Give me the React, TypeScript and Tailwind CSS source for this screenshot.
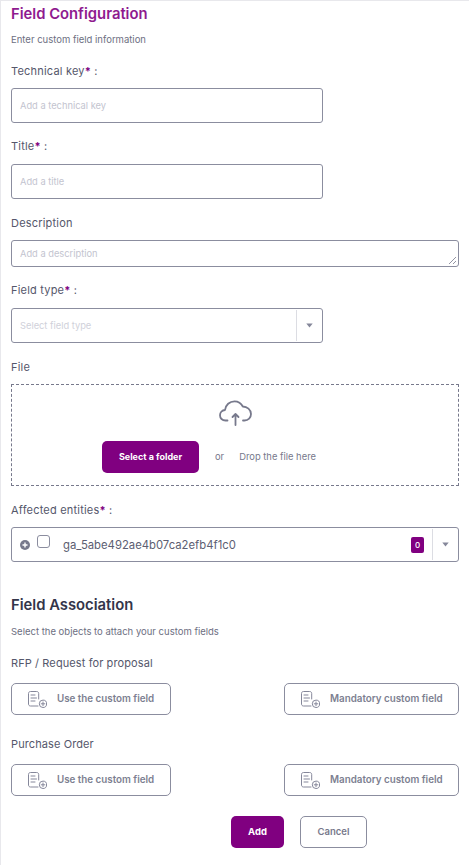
import React from "react";

const Label = ({ text, req, cls }: { text: string; req?: boolean; cls: string }) => (
  <div className={`text-[11px] leading-[16px] font-normal text-[#55576b] tracking-[0.2px] ${cls}`}>
    {text}
    {req && <span className="text-[#800080] font-bold">*</span>}
    {req && <span> :</span>}
  </div>
);

const Caret = () => (
  <svg width="7" height="5" viewBox="0 0 7 5" aria-hidden="true">
    <path d="M0.3 0.6H6.7L3.5 4.6Z" fill="#85879a" />
  </svg>
);

const DocPlus = () => (
  <svg width="19" height="17" viewBox="0 0 19 17" fill="none" stroke="#85879a" strokeWidth="1" strokeLinecap="round" aria-hidden="true">
    <path d="M10 15H2.5C1.3 15 .5 14.2 .5 13V2.5C.5 1.3 1.3 .5 2.5 .5H8.7C9.9 .5 10.7 1.3 10.7 2.5V8" />
    <path d="M3 4H7M3 7H8.5M3 10H7" />
    <circle cx="15" cy="12.8" r="3.7" />
    <path d="M15 11V14.6M13.2 12.8H16.8" />
  </svg>
);

const AssocButton = ({ text, width }: { text: string; width: string }) => (
  <button className={`h-[32px] ${width} pl-[16px] flex items-center gap-[10px] bg-white border border-[#8b8d9f] rounded-[5px] text-[9.8px] font-semibold text-[#7d7f91] whitespace-nowrap`}>
    <DocPlus />
    <span>{text}</span>
  </button>
);

const Input = ({ ph, cls }: { ph: string; cls: string }) => (
  <div className={`h-[35px] w-[312px] flex items-center pl-[8px] bg-white border border-[#8b8d9f] rounded-[3px] text-[9.3px] text-[#c3c4cf] ${cls}`}>
    {ph}
  </div>
);

export default function App() {
  return (
    <div className="w-[469px] h-[865px] overflow-hidden bg-white border-l border-[#e8e8ec] border-t pl-[10px] pr-[9px] font-['Inter',sans-serif]">
      <div className="text-[14.8px] leading-[20px] font-semibold text-[#8f1a8f] mt-[3px]">Field Configuration</div>
      <div className="text-[9.5px] leading-[12px] text-[#6d6f82] mt-[10px]">Enter custom field information</div>
      <Label text="Technical key" req cls="mt-[17px]" />
      <Input ph="Add a technical key" cls="mt-[9px]" />
      <Label text="Title" req cls="mt-[15px]" />
      <Input ph="Add a title" cls="mt-[10px]" />
      <Label text="Description" cls="mt-[16px]" />
      <div className="relative h-[27px] w-[448px] flex items-center pl-[8px] mt-[9px] bg-white border border-[#8b8d9f] rounded-[3px] text-[9.3px] text-[#c3c4cf]">
        Add a description
        <svg className="absolute right-[1px] bottom-[1px]" width="9" height="9" viewBox="0 0 9 9" stroke="#77798c" strokeWidth="0.8" aria-hidden="true">
          <path d="M1 8L8 1M5 8L8 5" />
        </svg>
      </div>
      <Label text="Field type" req cls="mt-[15px]" />
      <div className="h-[35px] w-[312px] flex items-center mt-[10px] bg-white border border-[#8b8d9f] rounded-[3px] text-[9.3px] text-[#d0d1da]">
        <span className="flex-1 pl-[8px]">Select field type</span>
        <span className="h-[31px] w-[26px] border-l border-[#dcdde3] flex items-center justify-center">
          <Caret />
        </span>
      </div>
      <Label text="File" cls="mt-[16px]" />
      <div className="h-[102px] w-[448px] mt-[9px] border border-dashed border-[#77798c] flex flex-col items-center">
        <svg className="mt-[15px] ml-[1px]" width="33" height="26" viewBox="0 0 33 26" fill="none" stroke="#77798c" strokeWidth="1.8" strokeLinecap="round" strokeLinejoin="round" aria-hidden="true">
          <path d="M8.5 20.5H6.5C3.2 20.5 1 18.2 1 15.3C1 12.4 3.2 10.2 6 10C6.6 5 10.6 1.3 15.5 1.3C19.3 1.3 22.3 3.4 23.8 6.5C28 6.6 32 9.6 32 14C32 17.8 29.2 20.5 25.5 20.5H24" />
          <path d="M16.5 25V14M13.5 17L16.5 14L19.5 17" />
        </svg>
        <div className="flex items-center mt-[15px] self-start">
          <button className="ml-[90px] w-[97px] h-[32px] bg-[#800080] rounded-[5px] text-white text-[9px] font-bold">Select a folder</button>
          <span className="ml-[16px] text-[9.4px] text-[#77798c]">or</span>
          <span className="ml-[15px] text-[9.4px] text-[#77798c]">Drop the file here</span>
        </div>
      </div>
      <Label text="Affected entities" req cls="mt-[16px]" />
      <div className="h-[35px] w-[448px] flex items-center mt-[9px] bg-white border border-[#8b8d9f] rounded-[3px]">
        <svg className="ml-[8px]" width="10" height="10" viewBox="0 0 10 10" aria-hidden="true">
          <circle cx="5" cy="5" r="5" fill="#77798c" />
          <path d="M5 2.5V7.5M2.5 5H7.5" stroke="#fff" strokeWidth="1.4" />
        </svg>
        <span className="ml-[7px] mb-[6px] w-[13px] h-[13px] border border-[#8b8d9f] rounded-[3px] bg-white" />
        <span className="ml-[13px] flex-1 pt-[1px] text-[11.3px] text-[#5c5e72]">ga_5abe492ae4b07ca2efb4f1c0</span>
        <span className="w-[13px] h-[16px] bg-[#800080] rounded-[2px] text-white text-[8px] font-medium flex items-center justify-center">0</span>
        <span className="ml-[8px] h-[31px] w-[26px] border-l border-[#dcdde3] flex items-center justify-center">
          <Caret />
        </span>
      </div>
      <div className="text-[14.8px] leading-[20px] font-semibold text-[#33354a] mt-[33px]">Field Association</div>
      <div className="text-[9.5px] leading-[12px] text-[#6d6f82] mt-[11px]">Select the objects to attach your custom fields</div>
      <div className="text-[11px] leading-[14px] text-[#55576b] tracking-[0.1px] mt-[18px]">RFP / Request for proposal</div>
      <div className="flex justify-between w-[448px] mt-[13px]">
        <AssocButton text="Use the custom field" width="w-[160px]" />
        <AssocButton text="Mandatory custom field" width="w-[175px]" />
      </div>
      <div className="text-[11px] leading-[14px] text-[#55576b] tracking-[0.1px] mt-[22px]">Purchase Order</div>
      <div className="flex justify-between w-[448px] mt-[13px]">
        <AssocButton text="Use the custom field" width="w-[160px]" />
        <AssocButton text="Mandatory custom field" width="w-[175px]" />
      </div>
      <div className="flex mt-[20px] ml-[220px] gap-[16px]">
        <button className="w-[53px] h-[32px] bg-[#800080] rounded-[5px] text-white text-[9.5px] font-bold">Add</button>
        <button className="w-[67px] h-[32px] bg-white border border-[#8b8d9f] rounded-[5px] text-[#77798c] text-[9.5px] font-semibold">Cancel</button>
      </div>
    </div>
  );
}
